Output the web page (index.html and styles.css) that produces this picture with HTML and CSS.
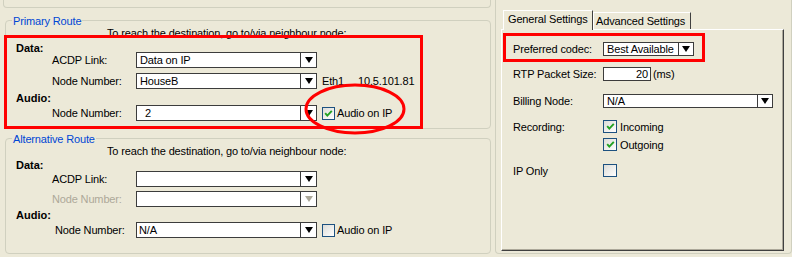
FILE: index.html
```html
<!DOCTYPE html>
<html>
<head>
<meta charset="utf-8">
<title>Route settings</title>
<link rel="stylesheet" href="styles.css">
</head>
<body>
<div class="screen">
  <div class="left">
    <div class="stub"></div>

    <div class="group group-primary">
      <span class="legend">Primary Route</span>
      <div class="intro">To reach the destination, go to/via neighbour node:</div>
      <div class="heading hp-data">Data:</div>
      <div class="row">
        <span class="lbl">ACDP Link:</span>
        <span class="combo"><span class="val">Data on IP</span><span class="btn"><i class="tri"></i></span></span>
      </div>
      <div class="row mt5">
        <span class="lbl">Node Number:</span>
        <span class="combo"><span class="val">HouseB</span><span class="btn"><i class="tri"></i></span></span>
        <span class="eth">Eth1</span><span class="ip">10.5.101.81</span>
      </div>
      <div class="heading hp-audio">Audio:</div>
      <div class="row">
        <span class="lbl">Node Number:</span>
        <span class="combo"><span class="val val-num">2</span><span class="btn"><i class="tri"></i></span></span>
        <span class="check checked"><svg viewBox="0 0 11 11" width="11" height="11"><path d="M2.2 5.2 L4.3 7.6 L8.8 2.8" fill="none" stroke="#21A121" stroke-width="1.9"/></svg></span>
        <span class="check-text">Audio on IP</span>
      </div>
    </div>

    <div class="group group-alt">
      <span class="legend">Alternative Route</span>
      <div class="intro">To reach the destination, go to/via neighbour node:</div>
      <div class="heading ha-data">Data:</div>
      <div class="row">
        <span class="lbl">ACDP Link:</span>
        <span class="combo"><span class="val"></span><span class="btn"><i class="tri"></i></span></span>
      </div>
      <div class="row mt4">
        <span class="lbl disabled">Node Number:</span>
        <span class="combo"><span class="val"></span><span class="btn"><i class="tri tri-off"></i></span></span>
      </div>
      <div class="heading ha-audio">Audio:</div>
      <div class="row row-shift">
        <span class="lbl lbl-short">Node Number:</span>
        <span class="combo"><span class="val val-na">N/A</span><span class="btn"><i class="tri"></i></span></span>
        <span class="check"></span>
        <span class="check-text">Audio on IP</span>
      </div>
    </div>

    <div class="red-box red-left"></div>
    <svg class="red-ellipse" viewBox="0 0 102 52" width="102" height="52"><ellipse cx="51" cy="26" rx="49" ry="24" fill="none" stroke="#F00" stroke-width="3"/></svg>
  </div>

  <div class="right">
    <div class="tabs">
      <span class="tab tab-active">General Settings</span>
      <span class="tab">Advanced Settings</span>
    </div>
    <div class="page">
      <div class="srow">
        <span class="slbl">Preferred codec:</span>
        <span class="combo sm w-codec"><span class="val">Best Available</span><span class="btn"><i class="tri"></i></span></span>
      </div>
      <div class="srow mt11">
        <span class="slbl">RTP Packet Size:</span>
        <span class="num">20</span><span class="unit">(ms)</span>
      </div>
      <div class="srow mt13">
        <span class="slbl">Billing Node:</span>
        <span class="combo sm w-billing"><span class="val">N/A</span><span class="btn"><i class="tri"></i></span></span>
      </div>
      <div class="srow srow-check mt12">
        <span class="slbl">Recording:</span>
        <span class="check checked"><svg viewBox="0 0 11 11" width="11" height="11"><path d="M2.2 5.2 L4.3 7.6 L8.8 2.8" fill="none" stroke="#21A121" stroke-width="1.9"/></svg></span>
        <span class="check-text wide">Incoming</span>
      </div>
      <div class="srow srow-check mt5">
        <span class="slbl"></span>
        <span class="check checked"><svg viewBox="0 0 11 11" width="11" height="11"><path d="M2.2 5.2 L4.3 7.6 L8.8 2.8" fill="none" stroke="#21A121" stroke-width="1.9"/></svg></span>
        <span class="check-text wide">Outgoing</span>
      </div>
      <div class="srow srow-check mt13">
        <span class="slbl">IP Only</span>
        <span class="check"></span>
      </div>
      <div class="red-box red-right"></div>
    </div>
  </div>
</div>
</body>
</html>
```
FILE: styles.css
```css
* { box-sizing: border-box; }
html, body { margin: 0; padding: 0; }
body {
  width: 792px;
  height: 257px;
  overflow: hidden;
  background: #ECE9D8;
  font-family: "Liberation Sans", Arial, sans-serif;
  font-size: 11px;
  letter-spacing: -0.15px;
  color: #000;
}
.screen { display: flex; height: 257px; }

/* left column */
.left { position: relative; width: 495px; flex: none; }
.stub {
  margin-left: 3px;
  width: 488px;
  height: 8px;
  border: 1px solid #D0D0BF;
  border-top: none;
  border-radius: 0 0 4px 4px;
}
.group {
  position: relative;
  margin-left: 5px;
  width: 486px;
  border: 1px solid #D0D0BF;
  border-radius: 4px;
  display: flex;
  flex-direction: column;
  padding-top: 5px;
}
.group-primary { margin-top: 12px; height: 109px; }
.group-alt { margin-top: 9px; height: 116px; }
.legend {
  position: absolute;
  top: -7px;
  left: 6px;
  padding: 0 1px;
  line-height: 14px;
  color: #0046D5;
  background: #ECE9D8;
}
.intro { height: 14px; line-height: 14px; padding-left: 101px; white-space: nowrap; }
.heading { font-weight: bold; padding-left: 10px; letter-spacing: 0; }
.hp-data { height: 12px; line-height: 16px; }
.hp-audio { height: 16px; line-height: 18px; }
.ha-data { height: 13px; line-height: 14px; }
.ha-audio { height: 15px; line-height: 16px; }

.row { display: flex; align-items: center; height: 16px; padding-left: 46px; white-space: nowrap; }
.row-shift { padding-left: 49px; }
.mt4 { margin-top: 4px; }
.mt5 { margin-top: 5px; }
.lbl { width: 84px; }
.lbl-short { width: 81px; }
.disabled { color: #ACA899; }

.combo {
  display: flex;
  width: 181px;
  height: 16px;
  border: 1px solid #3C3C3C;
  background: #fff;
}
.combo .val { flex: 1; padding-left: 3px; line-height: 14px; overflow: hidden; }
.combo .val-num { padding-left: 8px; }
.combo .val-na { padding-left: 2px; }
.combo .btn {
  width: 16px;
  border-left: 1px solid #3C3C3C;
  display: flex;
  align-items: center;
  justify-content: center;
}
.tri {
  display: block;
  width: 0;
  height: 0;
  border-left: 4px solid transparent;
  border-right: 4px solid transparent;
  border-top: 6px solid #000;
}
.tri-off { border-top-color: #ACA899; }

.eth { margin-left: 5px; width: 36px; }
.check {
  display: flex;
  align-items: center;
  justify-content: center;
  width: 13px;
  height: 13px;
  margin-left: 5px;
  border: 1px solid #1C5180;
  background: linear-gradient(135deg, #DCDCD7, #FFFFFF);
}
.check-text { margin-left: 2px; }

.red-box { position: absolute; border: 3px solid #F00; pointer-events: none; }
.red-left { left: 4px; top: 35px; width: 419px; height: 94px; }
.red-ellipse { position: absolute; left: 304px; top: 83px; }

/* right column */
.right {
  width: 297px;
  height: 254px;
  flex: none;
  border-left: 1px solid #D0D0BF;
  border-right: 1px solid #D0D0BF;
  border-bottom: 1px solid #D0D0BF;
  border-radius: 0 0 4px 4px;
  padding: 10px 0 0 5px;
}
.tabs { display: flex; align-items: flex-end; height: 19px; padding-left: 2px; }
.tab {
  height: 17px;
  line-height: 16px;
  padding-left: 2px;
  border-top: 1px solid #fff;
  border-left: 1px solid #fff;
  border-right: 1px solid #404040;
  white-space: nowrap;
}
.tab:first-child { width: 90px; }
.tab:last-child { width: 98px; }
.tab-active {
  position: relative;
  z-index: 1;
  height: 20px;
  margin-bottom: -1px;
  padding-left: 4px;
  background: #ECE9D8;
}
.page {
  position: relative;
  width: 283px;
  height: 222px;
  border-top: 1px solid #fff;
  border-left: 1px solid #fff;
  border-right: 1px solid #404040;
  border-bottom: 1px solid #404040;
  box-shadow: inset -1px -1px 0 #ACA899;
  padding: 12px 0 0 11px;
}
.srow { display: flex; align-items: center; height: 14px; white-space: nowrap; }
.srow-check { height: 13px; }
.mt11 { margin-top: 11px; }
.mt12 { margin-top: 12px; }
.mt13 { margin-top: 13px; }
.slbl { width: 90px; }
.srow .check { margin-left: 0; width: 14px; }
.check-text.wide { margin-left: 3px; }
.combo.sm { height: 14px; }
.combo.sm .val { line-height: 12px; }
.combo.sm .btn { width: 15px; }
.w-codec { width: 91px; }
.w-billing { width: 170px; }
.num {
  width: 48px;
  height: 14px;
  line-height: 12px;
  border: 1px solid #3C3C3C;
  background: #fff;
  text-align: right;
  padding-right: 2px;
}
.unit { margin-left: 2px; }
.red-right { left: 1px; top: 3px; width: 202px; height: 29px; }
```
